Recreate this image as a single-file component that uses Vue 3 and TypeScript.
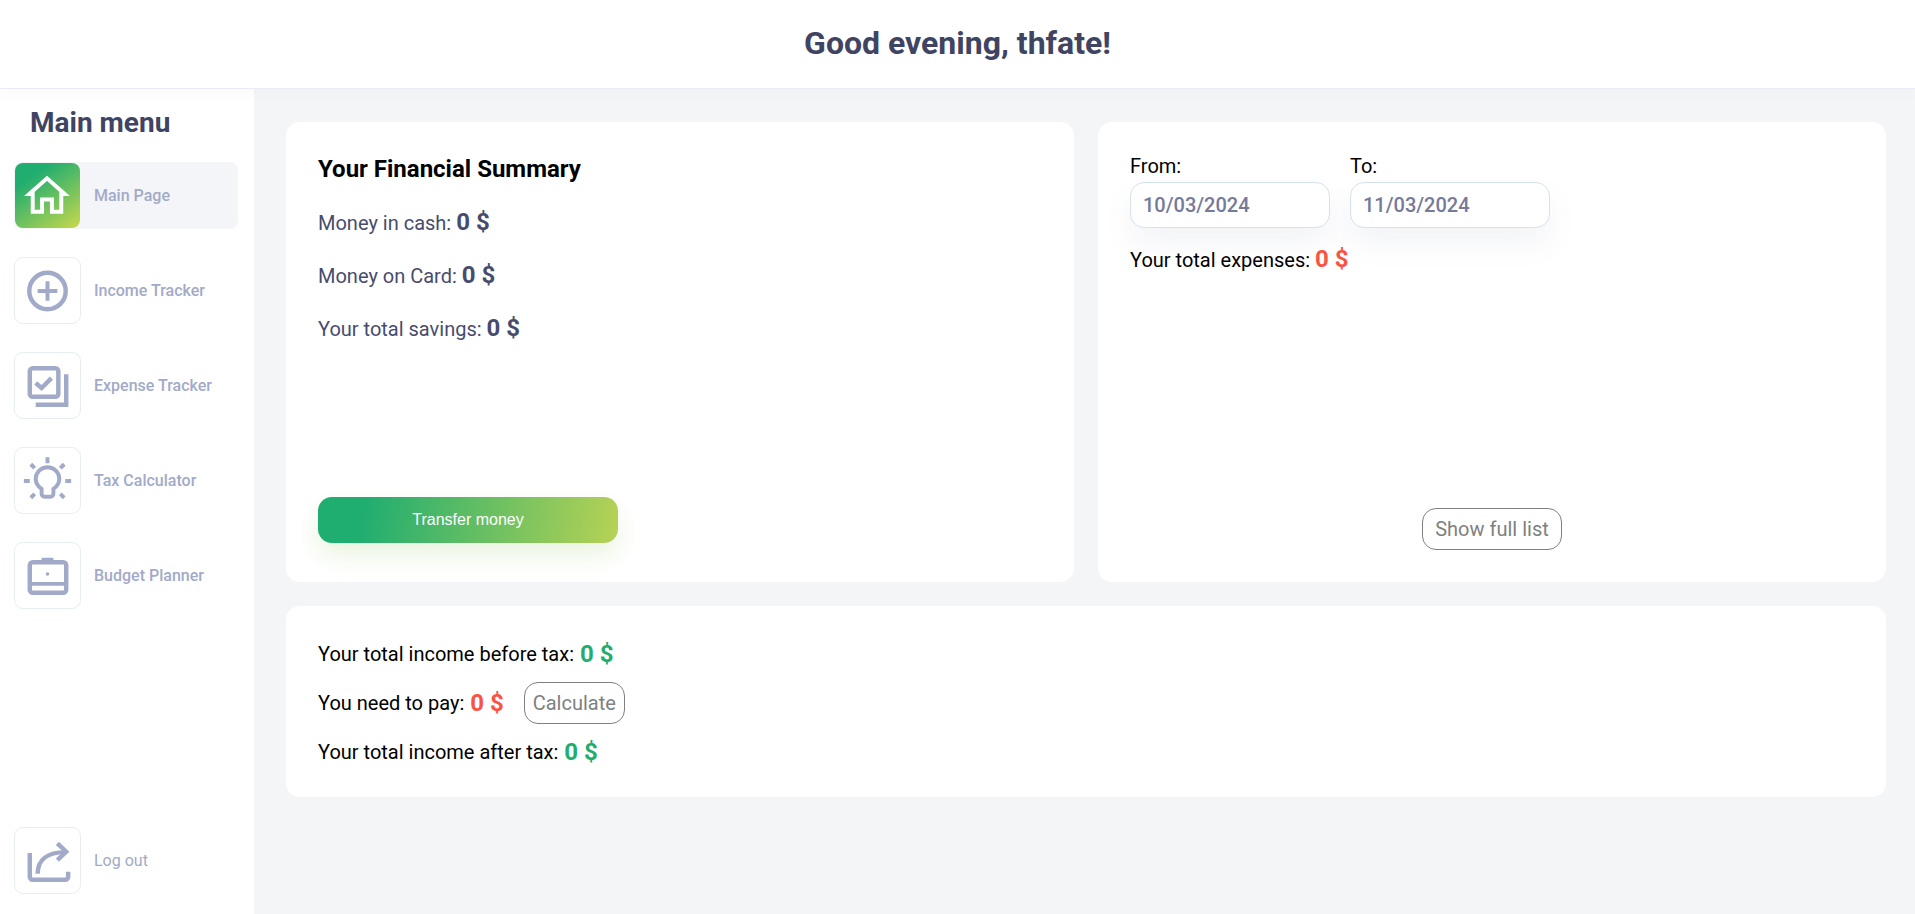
<script setup lang="ts">
interface MenuItem {
  label: string
  icon: string
  active?: boolean
}

const menu: MenuItem[] = [
  { label: 'Main Page', icon: 'home', active: true },
  { label: 'Income Tracker', icon: 'plus' },
  { label: 'Expense Tracker', icon: 'check' },
  { label: 'Tax Calculator', icon: 'bulb' },
  { label: 'Budget Planner', icon: 'case' },
]

const summary = [
  { label: 'Money in cash:', value: '0 $' },
  { label: 'Money on Card:', value: '0 $' },
  { label: 'Your total savings:', value: '0 $' },
]
</script>

<template>
  <div class="page">
    <header class="top">
      <h1>Good evening, thfate!</h1>
    </header>

    <div class="body">
      <aside class="side">
        <h2>Main menu</h2>
        <nav class="nav">
          <a v-for="item in menu" :key="item.label" class="row" :class="{ active: item.active }">
            <span class="ico">
              <svg width="66" height="66" viewBox="0 0 66 66" fill="none">
                <g v-if="item.icon === 'home'" stroke="#fff" stroke-width="4">
                  <path d="M14.5 31 32.5 15 50.500 31H47v18H37.500V36.500H27.500V49H18V31z" />
                </g>
                <g v-else-if="item.icon === 'plus'" stroke="#a2aac9" stroke-width="4.5">
                  <circle cx="33" cy="33" r="18.500" />
                  <path d="M33 23v20M23 33h20" stroke-width="4" />
                </g>
                <g v-else-if="item.icon === 'check'" stroke="#a2aac9" stroke-width="4.5">
                  <rect x="15" y="15" width="29" height="29" rx="3" />
                  <path d="M21 30l6 5 10-10" stroke-width="4.500" />
                  <path d="M52 21v31H21" />
                </g>
                <g v-else-if="item.icon === 'bulb'" stroke="#a2aac9" stroke-width="4">
                  <path d="M27 41c-3-2-6-5-6-10a12 12 0 0 1 24 0c0 5-3 8-6 10v5a3 3 0 0 1-3 3h-6a3 3 0 0 1-3-3z" />
                  <path d="M33 9v6M9 33h6M51 33h6M16 16l4 4M50 16l-4 4M16 50l4-4M50 50l-4-4" />
                </g>
                <g v-else stroke="#a2aac9" stroke-width="4.5">
                  <rect x="15" y="19" width="37" height="31" rx="3" />
                  <path d="M15 41h37" stroke-width="4" />
                  <path d="M27 16h12" stroke-width="3" />
                  <circle cx="33" cy="31" r="1.800" fill="#a2aac9" stroke="none" />
                </g>
              </svg>
            </span>
            <span class="txt">{{ item.label }}</span>
          </a>
        </nav>
        <a class="row logout">
          <span class="ico">
            <svg width="66" height="66" viewBox="0 0 66 66" fill="none" stroke="#a2aac9" stroke-width="4.5">
              <path d="M15 25v24a3 3 0 0 0 3 3h33a3 3 0 0 0 3-3v-5" />
              <path d="M23 46c0-14 10-22 28-22" />
              <path d="M43 15l9 8.500-9 8.500" />
            </svg>
          </span>
          <span class="txt">Log out</span>
        </a>
      </aside>

      <main class="main">
        <div class="cards">
          <section class="card summary">
            <h3>Your Financial Summary</h3>
            <p v-for="s in summary" :key="s.label" class="line">
              {{ s.label }} <b>{{ s.value }}</b>
            </p>
            <button class="transfer">Transfer money</button>
          </section>

          <section class="card expenses">
            <div class="dates">
              <label>
                From:
                <span class="date">10/03/2024</span>
              </label>
              <label>
                To:
                <span class="date">11/03/2024</span>
              </label>
            </div>
            <p class="total">Your total expenses: <b class="red">0 $</b></p>
            <button class="ghost full">Show full list</button>
          </section>
        </div>

        <section class="card tax">
          <p>Your total income before tax: <b class="green">0 $</b></p>
          <p>You need to pay: <b class="red">0 $</b> <button class="ghost calc">Calculate</button></p>
          <p>Your total income after tax: <b class="green">0 $</b></p>
        </section>
      </main>
    </div>
  </div>
</template>

<style>
body {
  background: #f4f5f7;
}
</style>

<style scoped>
.page {
  height: 914px;
  display: flex;
  flex-direction: column;
  font-family: Roboto, sans-serif;
  overflow: hidden;
}

.top {
  position: relative;
  height: 88px;
  flex: none;
  background: #fff;
  border-bottom: 1px solid #e9ecf6;
  box-shadow: 0 4px 14px rgba(90, 100, 140, 0.03);
  display: flex;
  align-items: center;
  justify-content: center;
}

.top h1 {
  margin: 0 0 2px;
  font-size: 32px;
  font-weight: 700;
  color: #3f4463;
}

.body {
  flex: 1;
  display: flex;
  min-height: 0;
}

.side {
  width: 254px;
  flex: none;
  background: #fff;
  display: flex;
  flex-direction: column;
  padding: 15px 0 20px 14px;
  box-sizing: border-box;
}

.side h2 {
  margin: 0 0 21px 16px;
  font-size: 28px;
  line-height: 37px;
  font-weight: 700;
  color: #3f4463;
}

.nav {
  display: flex;
  flex-direction: column;
  gap: 28px;
}

.row {
  display: flex;
  align-items: center;
  gap: 13px;
  height: 67px;
  width: 224px;
  border-radius: 8px;
}

.row.active {
  background: #f4f5f8;
}

.ico {
  width: 67px;
  height: 67px;
  flex: none;
  box-sizing: border-box;
  border: 1px solid #e7eef2;
  border-radius: 9px;
  display: flex;
  align-items: center;
  justify-content: center;
}

.active .ico {
  border-color: transparent;
  background: linear-gradient(145deg, #1fad70 22%, #c9d84a 100%) padding-box;
}

.txt {
  font-size: 16px;
  font-weight: 500;
  color: #a2aac9;
}

.logout {
  margin-top: auto;
}

.logout .txt {
  font-weight: 400;
  font-size: 16px;
}

.main {
  flex: 1;
  padding: 33px 29px 0 32px;
  display: flex;
  flex-direction: column;
  gap: 24px;
}

.cards {
  display: grid;
  grid-template-columns: 1fr 1fr;
  gap: 24px;
}

.card {
  background: #fff;
  border-radius: 14px;
  box-sizing: border-box;
  padding: 32px;
}

.summary,
.expenses {
  height: 460px;
  display: flex;
  flex-direction: column;
}

.summary {
  padding: 31px 32px 39px;
}

.summary h3 {
  margin: 0 0 24px;
  font-size: 24px;
  line-height: 32px;
  font-weight: 700;
  color: #000;
}

.line {
  margin: 0 0 24px;
  font-size: 20px;
  line-height: 29px;
  color: #474c6e;
}

b {
  font-size: 24px;
  line-height: 1;
  font-weight: 700;
}

.line b {
  color: #474c6e;
}

.transfer {
  margin-top: auto;
  width: 300px;
  height: 46px;
  border: 0;
  border-radius: 14px;
  background: linear-gradient(100deg, #1fad70 15%, #b3d155 98%);
  box-shadow: 0 12px 24px rgba(150, 200, 100, 0.2);
  font-family: "Liberation Sans", Arial, sans-serif;
  font-size: 16px;
  color: #fff;
}

.dates {
  display: flex;
  gap: 20px;
  font-size: 20px;
  color: #000;
}

.dates label {
  display: flex;
  flex-direction: column;
  gap: 3px;
  line-height: 25px;
}

.date {
  width: 200px;
  height: 46px;
  box-sizing: border-box;
  padding-left: 12px;
  border: 1px solid #d5e2ee;
  border-radius: 14px;
  background: #fff;
  display: flex;
  align-items: center;
  font-size: 20px;
  font-weight: 500;
  color: #757a9b;
  box-shadow: 0 16px 30px rgba(90, 100, 140, 0.07);
}

.total {
  margin: 18px 0 0;
  font-size: 20px;
  line-height: 29px;
  color: #000;
}

.red {
  color: #fb5343;
}

.green {
  color: #1fad70;
}

.ghost {
  border: 1px solid #808080;
  border-radius: 14px;
  background: #fff;
  font-family: Roboto, sans-serif;
  font-size: 20px;
  color: #808080;
}

.full {
  margin: auto auto 0;
  height: 42px;
  padding: 0 12px;
}

.tax {
  height: 191px;
  padding: 27px 32px 0;
}

.tax p {
  margin: 0 0 7px;
  height: 42px;
  display: flex;
  align-items: center;
  gap: 6px;
  font-size: 20px;
  color: #000;
}

.calc {
  height: 42px;
  width: 101px;
  padding: 0;
  margin-left: 14px;
}
</style>
